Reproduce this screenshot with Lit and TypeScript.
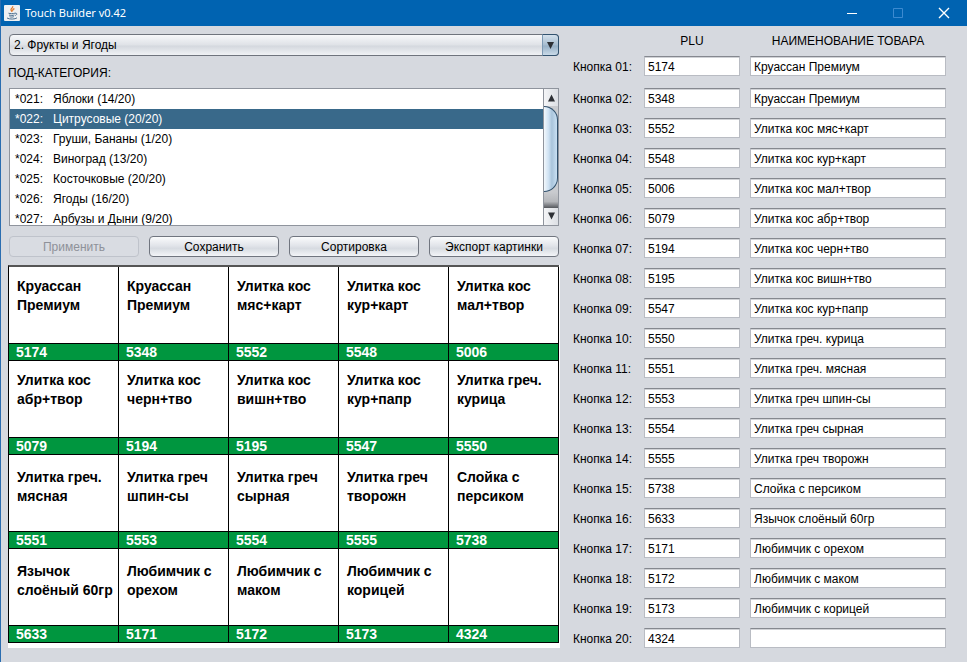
import { LitElement, html, css, svg } from "lit";
import { customElement, state } from "lit/decorators.js";
import { classMap } from "lit/directives/class-map.js";

interface Item {
  plu: string;
  name: string;
  tile: string[];
}

const item = (plu: string, first = "", second = ""): Item => ({
  plu,
  name: [first, second].filter(Boolean).join(" "),
  tile: [first, second],
});

const ITEMS: Item[] = [
  item("5174", "Круассан", "Премиум"),
  item("5348", "Круассан", "Премиум"),
  item("5552", "Улитка кос", "мяс+карт"),
  item("5548", "Улитка кос", "кур+карт"),
  item("5006", "Улитка кос", "мал+твор"),
  item("5079", "Улитка кос", "абр+твор"),
  item("5194", "Улитка кос", "черн+тво"),
  item("5195", "Улитка кос", "вишн+тво"),
  item("5547", "Улитка кос", "кур+папр"),
  item("5550", "Улитка греч.", "курица"),
  item("5551", "Улитка греч.", "мясная"),
  item("5553", "Улитка греч", "шпин-сы"),
  item("5554", "Улитка греч", "сырная"),
  item("5555", "Улитка греч", "творожн"),
  item("5738", "Слойка с", "персиком"),
  item("5633", "Язычок", "слоёный 60гр"),
  item("5171", "Любимчик с", "орехом"),
  item("5172", "Любимчик с", "маком"),
  item("5173", "Любимчик с", "корицей"),
  item("4324"),
];

const SUBCATEGORIES: [string, string][] = [
  ["*021:", "Яблоки (14/20)"],
  ["*022:", "Цитрусовые (20/20)"],
  ["*023:", "Груши, Бананы (1/20)"],
  ["*024:", "Виноград (13/20)"],
  ["*025:", "Косточковые (20/20)"],
  ["*026:", "Ягоды (16/20)"],
  ["*027:", "Арбузы и Дыни (9/20)"],
];

const javaCup = svg`
  <rect x="0" y="0" width="16" height="16" rx="1" fill="#eef0f2"/>
  <path d="M8.6 1.2c1.2 1.6-2.4 2.3-1.6 3.8.3.7 1 1.1 1.1 1.9M10.4 3.6c-1.3.6-2.2 1.3-1.4 2.3" fill="none" stroke="#e0782a" stroke-width="1.2"/>
  <path d="M4.5 8.2c1.6.6 4.8.6 6.4 0M5 10c1.6.6 4 .6 5.4 0M5.6 11.7c1.2.5 3 .5 4.2 0M11 8.2c2.2-.5 2.4 1.5.3 2.3M3 13c2.2 1.5 8.4 1.4 10-.2" fill="none" stroke="#4c6f8f"/>`;

@customElement("title-bar")
export class TitleBar extends LitElement {
  static styles = css`
    :host {
      display: flex;
      align-items: center;
      height: 26px;
      padding-left: 3px;
      background: #0063b1;
      color: #fff;
    }
    .icon {
      width: 16px;
      height: 16px;
    }
    .title {
      flex: 1;
      margin: 0 0 0 5px;
      font: 400 11px/16px "Noto Sans", "Open Sans", sans-serif;
    }
    .control {
      display: grid;
      place-items: center;
      width: 46px;
      height: 26px;
      padding: 0;
      border: 0;
      background: none;
      color: #fff;
    }
    .control:disabled {
      color: #3c8ad0;
    }
    .glyph {
      width: 12px;
      height: 12px;
      fill: none;
      stroke: currentColor;
    }
  `;

  render() {
    return html`
      <svg class="icon" viewBox="0 0 16 16" aria-hidden="true">${javaCup}</svg>
      <h1 class="title">Touch Builder v0.42</h1>
      <button class="control" aria-label="Свернуть">
        <svg class="glyph" viewBox="0 0 12 12"><path d="M1 6.5h10" /></svg>
      </button>
      <button class="control" aria-label="Развернуть" disabled>
        <svg class="glyph" viewBox="0 0 12 12"><path d="M1.5 1.5h9v9h-9z" /></svg>
      </button>
      <button class="control" aria-label="Закрыть">
        <svg class="glyph" viewBox="0 0 12 12"><path d="M1 1l10 10M11 1L1 11" stroke-width="1.4" /></svg>
      </button>
    `;
  }
}

@customElement("category-panel")
export class CategoryPanel extends LitElement {
  @state() private selected = 1;

  static styles = css`
    :host {
      display: block;
      min-width: 0;
    }
    .combo {
      position: relative;
      height: 22px;
      margin: 8px 1px 0;
    }
    .select {
      appearance: none;
      width: 100%;
      height: 22px;
      padding: 0 24px 0 4px;
      border: 1px solid #6f747d;
      border-radius: 4px;
      background: linear-gradient(#f7f8fa, #dfe2e7 50%, #d4d8de 55%, #f0f2f5);
      font: 12px/20px "Liberation Sans", Arial, sans-serif;
      color: #000;
    }
    .drop {
      position: absolute;
      top: 0;
      right: 0;
      box-sizing: border-box;
      width: 17px;
      height: 22px;
      border: 1px solid #33536f;
      border-left-color: #7d99b3;
      border-radius: 0 4px 4px 0;
      background: linear-gradient(#d5e1ec, #a6bccf 50%, #97b0c6 55%, #c9dae8);
      pointer-events: none;
    }
    .caption {
      display: block;
      margin: 9px 0 7px;
      font-size: 12px;
      line-height: 16px;
    }
    .listbox {
      display: flex;
      height: 138px;
      margin: 0 1px;
      border: 1px solid #8f949d;
      box-sizing: border-box;
      background: #fff;
      overflow: hidden;
    }
    .rows {
      flex: 1;
      margin: 0;
      padding: 0;
      list-style: none;
    }
    .row {
      display: flex;
      gap: 10px;
      padding-left: 5px;
      font-size: 12px;
      line-height: 20px;
      cursor: default;
    }
    .chosen {
      background: #39698a;
      color: #fff;
    }
    .scroll {
      display: flex;
      flex-direction: column;
      width: 14px;
      border-left: 1px solid #8f949d;
      background: linear-gradient(#c9cbcf, #c9cbcf 85%, #6f7277 88%);
    }
    .arrow {
      height: 17px;
      background: linear-gradient(90deg, #f4f5f7, #dcdfe4);
    }
    .triangle {
      display: block;
      width: 100%;
      height: 100%;
      fill: #2d3035;
    }
    .thumb {
      flex: 1;
      border: solid #30506c;
      border-width: 1px 1px 1px 0;
      border-radius: 0 14px 14px 0;
      background: linear-gradient(90deg, #f3f8fc, #cfe2f3 35%, #a9c4db 60%, #c9e0f3);
    }
    .track {
      height: 16px;
      background: linear-gradient(#c9cbcf, #b5b7bb 60%, #55585d);
    }
    .actions {
      display: grid;
      grid-template-columns: repeat(4, minmax(0, 1fr));
      gap: 10px;
      margin: 10px 1px 8px;
    }
    .action {
      height: 21px;
      padding: 0;
      border: 1px solid #70757f;
      border-radius: 4px;
      background: linear-gradient(#fafbfc, #e2e5ea 45%, #d7dbe1 60%, #f3f5f8);
      font: 12px/16px "Liberation Sans", Arial, sans-serif;
      color: #000;
      white-space: nowrap;
    }
    .action:disabled {
      border-color: #bfc3cb;
      background: #d9dce2;
      color: #8e9199;
    }
  `;

  render() {
    return html`
      <div class="combo">
        <select class="select" aria-label="Категория">
          <option>2. Фрукты и Ягоды</option>
        </select>
        <span class="drop">
          <svg class="triangle" viewBox="0 0 15 20"><path d="M4 7h7l-3.5 7z" /></svg>
        </span>
      </div>
      <span class="caption" id="sub">ПОД-КАТЕГОРИЯ:</span>
      <div class="listbox">
        <ul class="rows" role="listbox" aria-labelledby="sub" tabindex="0">
          ${SUBCATEGORIES.map(
            ([code, name], i) => html`
              <li
                class=${classMap({ row: true, chosen: i === this.selected })}
                role="option"
                aria-selected=${i === this.selected}
                @click=${() => (this.selected = i)}
              >
                <span>${code}</span><span>${name}</span>
              </li>
            `
          )}
        </ul>
        <div class="scroll" aria-hidden="true">
          <div class="arrow">
            <svg class="triangle" viewBox="0 0 14 16"><path d="M4 12h7l-3.5-7z" /></svg>
          </div>
          <div class="thumb"></div>
          <div class="track"></div>
          <div class="arrow">
            <svg class="triangle" viewBox="0 0 14 16"><path d="M4 4h7l-3.5 7z" /></svg>
          </div>
        </div>
      </div>
      <div class="actions">
        <button class="action" disabled>Применить</button>
        <button class="action">Сохранить</button>
        <button class="action">Сортировка</button>
        <button class="action">Экспорт картинки</button>
      </div>
    `;
  }
}

@customElement("key-preview")
export class KeyPreview extends LitElement {
  static styles = css`
    :host {
      display: block;
      padding: 0 1px 5px 0;
      background: #fff;
    }
    .tiles {
      display: grid;
      grid-template-columns: repeat(5, minmax(0, 1fr));
      border-top: 2px solid #555;
      border-left: 1px solid #000;
    }
    .tile {
      border-right: 1px solid #000;
      min-width: 0;
    }
    .name {
      box-sizing: border-box;
      height: 76px;
      padding: 10px 0 0 8px;
      font-size: 14px;
      font-weight: 700;
      line-height: 19px;
      white-space: nowrap;
    }
    .tile:nth-child(n + 11) .name {
      padding-top: 13px;
    }
    .line {
      display: block;
    }
    .code {
      padding-left: 7px;
      border: solid #000;
      border-width: 1px 0;
      background: #00963f;
      color: #fff;
      font-size: 14px;
      font-weight: 700;
      line-height: 16px;
    }
  `;

  render() {
    return html`
      <div class="tiles">
        ${ITEMS.map(
          (it) => html`
            <div class="tile">
              <div class="name">${it.tile.map((t) => html`<span class="line">${t}</span>`)}</div>
              <div class="code">${it.plu}</div>
            </div>
          `
        )}
      </div>
    `;
  }
}

@customElement("key-form")
export class KeyForm extends LitElement {
  static styles = css`
    :host {
      display: block;
      min-width: 0;
      font-size: 12px;
      line-height: 20px;
    }
    .line {
      display: grid;
      grid-template-columns: 61px minmax(0, 96fr) minmax(0, 196fr);
      column-gap: 10px;
      height: 20px;
      margin-bottom: 10px;
    }
    .head {
      margin: 5px 0;
      text-align: center;
    }
    .plu {
      grid-column: 2;
    }
    .first {
      margin-bottom: 12px;
    }
    .label {
      line-height: 22px;
      white-space: nowrap;
    }
    .field {
      box-sizing: border-box;
      width: 100%;
      height: 20px;
      padding: 1px 3px 0;
      border: 1px solid #b9bcc3;
      border-top: 1px solid #85888f;
      border-radius: 0;
      background: #fff;
      box-shadow: inset 0 1px 0 #d0d2d6;
      font: 12px/16px "Liberation Sans", Arial, sans-serif;
      color: #000;
    }
  `;

  render() {
    return html`
      <div class="line head">
        <span class="plu" id="plu">PLU</span>
        <span id="name">НАИМЕНОВАНИЕ ТОВАРА</span>
      </div>
      ${ITEMS.map((it, i) => {
        const n = String(i + 1).padStart(2, "0");
        return html`
          <div class=${classMap({ line: true, first: i === 0 })}>
            <label class="label" id="l${n}" for="p${n}">Кнопка ${n}:</label>
            <input class="field" id="p${n}" .value=${it.plu} />
            <input class="field" aria-labelledby="l${n} name" .value=${it.name} />
          </div>
        `;
      })}
    `;
  }
}

@customElement("app-root")
export class AppRoot extends LitElement {
  static styles = css`
    :host {
      display: block;
      box-sizing: border-box;
      min-height: 100vh;
      border-left: 1px solid #2a6db0;
      background: #d6d9df;
      color: #000;
      font-family: "Liberation Sans", Arial, sans-serif;
    }
    .main {
      display: grid;
      grid-template-columns: minmax(0, 552fr) minmax(0, 373fr);
      gap: 13px;
      padding: 0 21px 0 7px;
    }
  `;

  render() {
    return html`
      <title-bar></title-bar>
      <main class="main">
        <section>
          <category-panel></category-panel>
          <key-preview></key-preview>
        </section>
        <key-form></key-form>
      </main>
    `;
  }
}
